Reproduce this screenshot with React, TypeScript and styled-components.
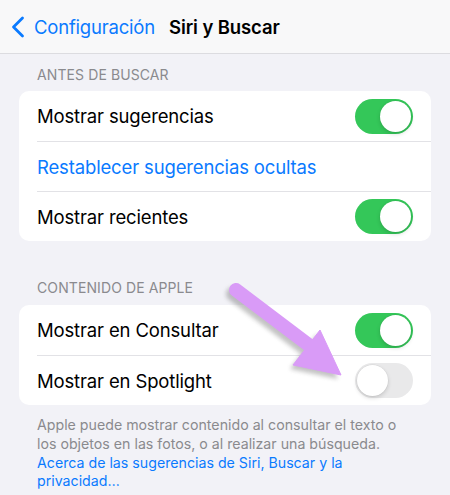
import React from "react";
import styled, { createGlobalStyle } from "styled-components";

const Global = createGlobalStyle`
  html, body { margin: 0; padding: 0; background: #f2f2f7; }
  body { font-family: Inter, "Noto Sans", sans-serif; -webkit-font-smoothing: antialiased; }
`;

const Page = styled.div`
  position: relative;
  width: 450px;
  height: 495px;
  overflow: hidden;
  background: #f2f2f7;
`;

const NavBar = styled.div`
  height: 54px;
  box-sizing: border-box;
  background: #f8f8f9;
  border-bottom: 1px solid #dcdce0;
  display: flex;
  align-items: center;
  padding: 0 0 0 11px;
`;

const Back = styled.div`
  display: flex;
  align-items: center;
  gap: 9px;
  color: #0a7aff;
  font-size: 18.5px;
  letter-spacing: -0.2px;
`;

const Title = styled.div`
  margin-left: 14px;
  font-size: 18.5px;
  font-weight: 600;
  color: #000;
  letter-spacing: -0.1px;
`;

const Content = styled.div`
  padding: 0 19px;
`;

const SectionHeader = styled.div<{ $top: number }>`
  padding: ${(p) => p.$top}px 0 0 18px;
  height: 17px;
  font-size: 14px;
  color: #8a8a8e;
  letter-spacing: 0.1px;
  margin-bottom: ${(p) => (p.$top > 12 ? 9 : 8)}px;
`;

const Card = styled.div`
  background: #fff;
  border-radius: 10px;
  overflow: hidden;
`;

const Row = styled.div<{ $sep?: boolean }>`
  height: 50px;
  margin-left: 18px;
  padding-right: 18px;
  display: flex;
  align-items: center;
  justify-content: space-between;
  box-sizing: border-box;
  border-top: ${(p) => (p.$sep ? "1px solid #e2e2e6" : "none")};
`;

const Label = styled.span<{ $link?: boolean }>`
  font-size: 18.5px;
  letter-spacing: -0.15px;
  color: ${(p) => (p.$link ? "#0a7aff" : "#000")};
`;

const Toggle = styled.div<{ $on: boolean }>`
  width: 58px;
  height: 35px;
  border-radius: 18px;
  background: ${(p) => (p.$on ? "#34c759" : "#e9e9ea")};
  position: relative;
  flex-shrink: 0;
`;

const Knob = styled.div<{ $on: boolean }>`
  position: absolute;
  top: 2px;
  left: ${(p) => (p.$on ? "25px" : "2px")};
  width: 31px;
  height: 31px;
  border-radius: 50%;
  background: #fff;
  box-shadow: 0 2px 4px rgba(0, 0, 0, 0.15), 0 0 0 0.5px rgba(0, 0, 0, 0.06);
`;

const Footer = styled.div`
  padding: 11px 18px 0 18px;
  font-size: 14.2px;
  line-height: 18.8px;
  color: #8a8a8e;
`;

const FooterLink = styled.span`
  color: #0a7aff;
`;

const ArrowLayer = styled.svg`
  position: absolute;
  left: 0;
  top: 0;
  pointer-events: none;
`;

const Switch = ({ on }: { on: boolean }) => (
  <Toggle $on={on}>
    <Knob $on={on} />
  </Toggle>
);

export default function App() {
  return (
    <Page>
      <Global />
      <NavBar>
        <Back>
          <svg width="14" height="22" viewBox="0 0 14 22">
            <path d="M11.5 2 L2.5 11 L11.5 20" fill="none" stroke="#0a7aff" strokeWidth="2.8" strokeLinecap="round" strokeLinejoin="round" />
          </svg>
          <span>Configuración</span>
        </Back>
        <Title>Siri y Buscar</Title>
      </NavBar>
      <Content>
        <SectionHeader $top={12}>ANTES DE BUSCAR</SectionHeader>
        <Card>
          <Row>
            <Label>Mostrar sugerencias</Label>
            <Switch on />
          </Row>
          <Row $sep>
            <Label $link>Restablecer sugerencias ocultas</Label>
          </Row>
          <Row $sep>
            <Label>Mostrar recientes</Label>
            <Switch on />
          </Row>
        </Card>
        <SectionHeader $top={38}>CONTENIDO DE APPLE</SectionHeader>
        <Card>
          <Row>
            <Label>Mostrar en Consultar</Label>
            <Switch on />
          </Row>
          <Row $sep>
            <Label>Mostrar en Spotlight</Label>
            <Switch on={false} />
          </Row>
        </Card>
        <Footer>
          Apple puede mostrar contenido al consultar el texto o los objetos en las fotos, o al realizar una búsqueda.{" "}
          <FooterLink>Acerca de las sugerencias de Siri, Buscar y la privacidad…</FooterLink>
        </Footer>
      </Content>
      <ArrowLayer width="450" height="495" viewBox="0 0 450 495">
        <defs>
          <filter id="sh" x="-20%" y="-20%" width="140%" height="140%">
            <feGaussianBlur stdDeviation="2" />
          </filter>
        </defs>
        <g transform="translate(-3 4)" opacity="0.35" filter="url(#sh)">
          <line x1="236" y1="290" x2="318" y2="352" stroke="#555" strokeWidth="14" strokeLinecap="round" />
          <polygon points="320,330 341,375 293,365" fill="#555" />
        </g>
        <line x1="236" y1="290" x2="318" y2="352" stroke="#d99bf7" strokeWidth="14" strokeLinecap="round" />
        <polygon points="320,330 341,375 293,365" fill="#d99bf7" strokeLinejoin="round" stroke="#d99bf7" strokeWidth="1" />
      </ArrowLayer>
    </Page>
  );
}
